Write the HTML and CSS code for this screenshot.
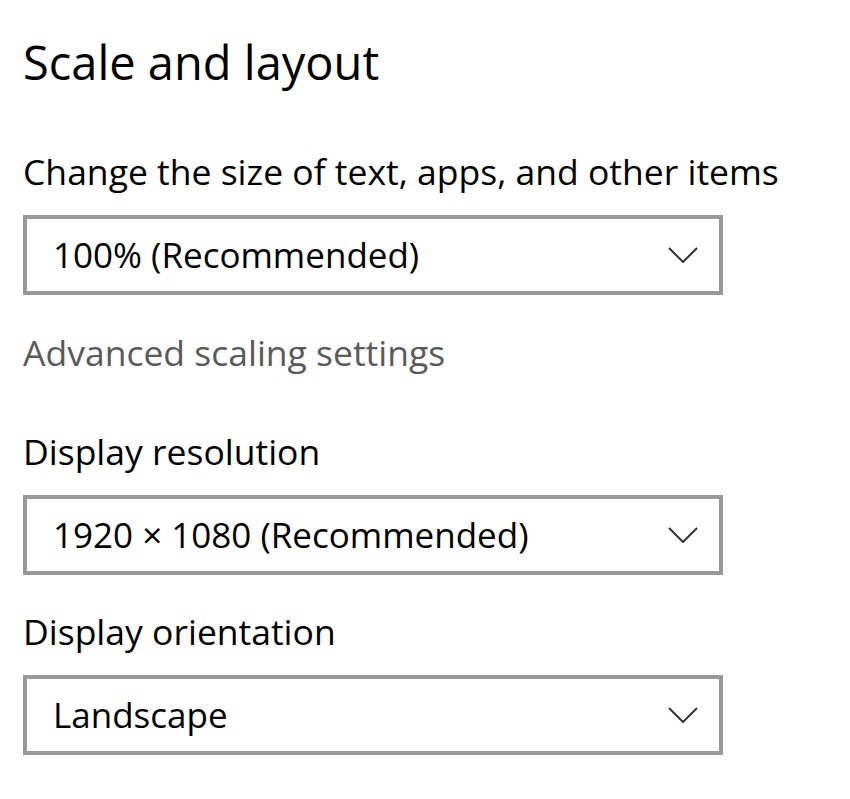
FILE: index.html
```html
<!DOCTYPE html>
<html lang="en">
<head>
<meta charset="utf-8">
<title>Scale and layout</title>
<link rel="stylesheet" href="styles.css">
</head>
<body>
<main class="panel">
  <h1 class="title">Scale and layout</h1>

  <section class="setting first">
    <div class="label">Change the size of text, apps, and other items</div>
    <div class="combo">
      <span class="combo-value">100% (Recommended)</span>
      <svg class="chevron" viewBox="0 0 30 16" width="30" height="16" aria-hidden="true"><path d="M1 1 L15 15 L29 1"/></svg>
    </div>
  </section>

  <div class="link">Advanced scaling settings</div>

  <section class="setting res">
    <div class="label">Display resolution</div>
    <div class="combo">
      <span class="combo-value">1920 × 1080 (Recommended)</span>
      <svg class="chevron" viewBox="0 0 30 16" width="30" height="16" aria-hidden="true"><path d="M1 1 L15 15 L29 1"/></svg>
    </div>
  </section>

  <section class="setting orient">
    <div class="label">Display orientation</div>
    <div class="combo">
      <span class="combo-value">Landscape</span>
      <svg class="chevron" viewBox="0 0 30 16" width="30" height="16" aria-hidden="true"><path d="M1 1 L15 15 L29 1"/></svg>
    </div>
  </section>
</main>
</body>
</html>
```
FILE: styles.css
```css
html, body {
  margin: 0;
  padding: 0;
  background: #ffffff;
}

body {
  font-family: "Open Sans", "Noto Sans", "Liberation Sans", sans-serif;
  color: #000000;
}

.panel {
  padding: 34px 0 0 23px;
  display: flex;
  flex-direction: column;
}

.title {
  margin: 0;
  font-size: 47px;
  line-height: 56px;
  font-weight: 400;
}

.label,
.link {
  font-size: 35.5px;
  line-height: 44px;
  white-space: nowrap;
}

.setting {
  display: flex;
  flex-direction: column;
  gap: 22px;
}

.setting.first { margin-top: 59px; }
.link { margin-top: 35px; color: #5a5a5a; }
.setting.res { margin-top: 55px; }
.setting.orient { margin-top: 34px; }

.combo {
  box-sizing: border-box;
  width: 700px;
  height: 80px;
  border: 4px solid #999999;
  background: #ffffff;
  display: flex;
  align-items: center;
  justify-content: space-between;
  padding: 0 21px 0 26px;
}

.combo-value {
  font-size: 35px;
  line-height: 44px;
  white-space: nowrap;
}

.chevron {
  fill: none;
  stroke: #333333;
  stroke-width: 2;
}
```
